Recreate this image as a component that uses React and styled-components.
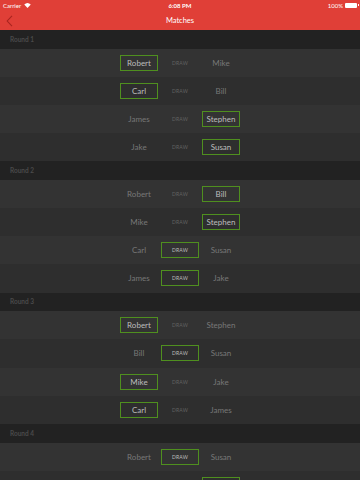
import React from 'react';
import styled, { createGlobalStyle } from 'styled-components';

const GlobalStyle = createGlobalStyle`
  html, body {
    margin: 0;
    padding: 0;
    background: #2d2d2d;
    font-family: Lato, "Open Sans", "Liberation Sans", sans-serif;
    -webkit-font-smoothing: antialiased;
  }
`;

const Screen = styled.div`
  width: 360px;
  height: 480px;
  overflow: hidden;
  background: #2d2d2d;
`;

const Top = styled.header`
  background-color: #e03f37;
  color: white;
  height: 30px;
  display: flex;
  flex-direction: column;
`;

const StatusBar = styled.div`
  height: 10px;
  display: grid;
  grid-template-columns: 1fr auto 1fr;
  align-items: center;
  padding: 0 3px;
  font-size: 6px;
`;

const Carrier = styled.div`
  display: flex;
  align-items: center;
  gap: 3px;
`;

const Clock = styled.div`
  font-weight: 700;
`;

const Battery = styled.div`
  display: flex;
  align-items: center;
  justify-content: flex-end;
  gap: 2px;
`;

const BatteryBody = styled.span`
  width: 12px;
  height: 5px;
  background: white;
  border-radius: 1px;
  position: relative;
  &::after {
    content: '';
    position: absolute;
    right: -2px;
    top: 1.5px;
    width: 1px;
    height: 2px;
    background: white;
  }
`;

const Nav = styled.nav`
  flex: 1;
  display: flex;
  align-items: center;
  justify-content: center;
  position: relative;
`;

const Back = styled.svg`
  position: absolute;
  left: 6px;
  top: 5px;
`;

const Title = styled.h1`
  margin: 0;
  font-size: 7.5px;
  font-weight: 400;
`;

const Section = styled.section``;

const SectionHeader = styled.div`
  height: 18.75px;
  background: #222;
  color: #4a4a4a;
  font-size: 6.5px;
  font-weight: 700;
  display: flex;
  align-items: center;
  padding-left: 10px;
`;

const Row = styled.div`
  height: 28.125px;
  background: ${p => (p.$odd ? '#2e2e2e' : '#333')};
  display: grid;
  grid-template-columns: 38px 38px 38px;
  column-gap: 3px;
  justify-content: center;
  align-items: center;
`;

const Cell = styled.div`
  height: 16px;
  box-sizing: border-box;
  border: 1px solid ${p => (p.$on ? '#4f8f1f' : 'transparent')};
  display: flex;
  align-items: center;
  justify-content: center;
  color: ${p => (p.$on ? '#bdbdbd' : '#787878')};
  font-size: 8px;
`;

const Draw = styled(Cell)`
  font-size: 5px;
  font-weight: 400;
  letter-spacing: 0.2px;
  color: ${p => (p.$on ? '#bdbdbd' : '#626262')};
`;

const rounds = [
  [
    ['Robert', 'Mike', 'L'],
    ['Carl', 'Bill', 'L'],
    ['James', 'Stephen', 'R'],
    ['Jake', 'Susan', 'R'],
  ],
  [
    ['Robert', 'Bill', 'R'],
    ['Mike', 'Stephen', 'R'],
    ['Carl', 'Susan', 'D'],
    ['James', 'Jake', 'D'],
  ],
  [
    ['Robert', 'Stephen', 'L'],
    ['Bill', 'Susan', 'D'],
    ['Mike', 'Jake', 'L'],
    ['Carl', 'James', 'L'],
  ],
  [
    ['Robert', 'Susan', 'D'],
    // only the top of this row's box shows in the screenshot
    ['', '', 'R', true],
  ],
];

function App() {
  return (
    <Screen>
      <GlobalStyle />
      <Top>
        <StatusBar>
          <Carrier>
            Carrier
            <svg width="7" height="5" viewBox="0 0 14 10">
              <path d="M7 10 L0.5 3.2 A9.5 9.5 0 0 1 13.5 3.2 Z" fill="white" />
            </svg>
          </Carrier>
          <Clock>6:08 PM</Clock>
          <Battery>
            100%
            <BatteryBody />
          </Battery>
        </StatusBar>
        <Nav>
          <Back width="7" height="12" viewBox="0 0 7 12">
            <path d="M6 0.8 L1.2 6 L6 11.2" stroke="#a8241f" strokeWidth="1.1" fill="none" />
          </Back>
          <Title>Matches</Title>
        </Nav>
      </Top>
      {rounds.map((games, r) => (
        <Section key={r}>
          <SectionHeader>Round {r + 1}</SectionHeader>
          {games.map(([a, b, res, partial], i) => (
            <Row key={i} $odd={i % 2 === 1}>
              <Cell $on={res === 'L'}>{a}</Cell>
              <Draw $on={res === 'D'}>{partial ? '' : 'DRAW'}</Draw>
              <Cell $on={res === 'R'}>{b}</Cell>
            </Row>
          ))}
        </Section>
      ))}
    </Screen>
  );
}

export default App;
